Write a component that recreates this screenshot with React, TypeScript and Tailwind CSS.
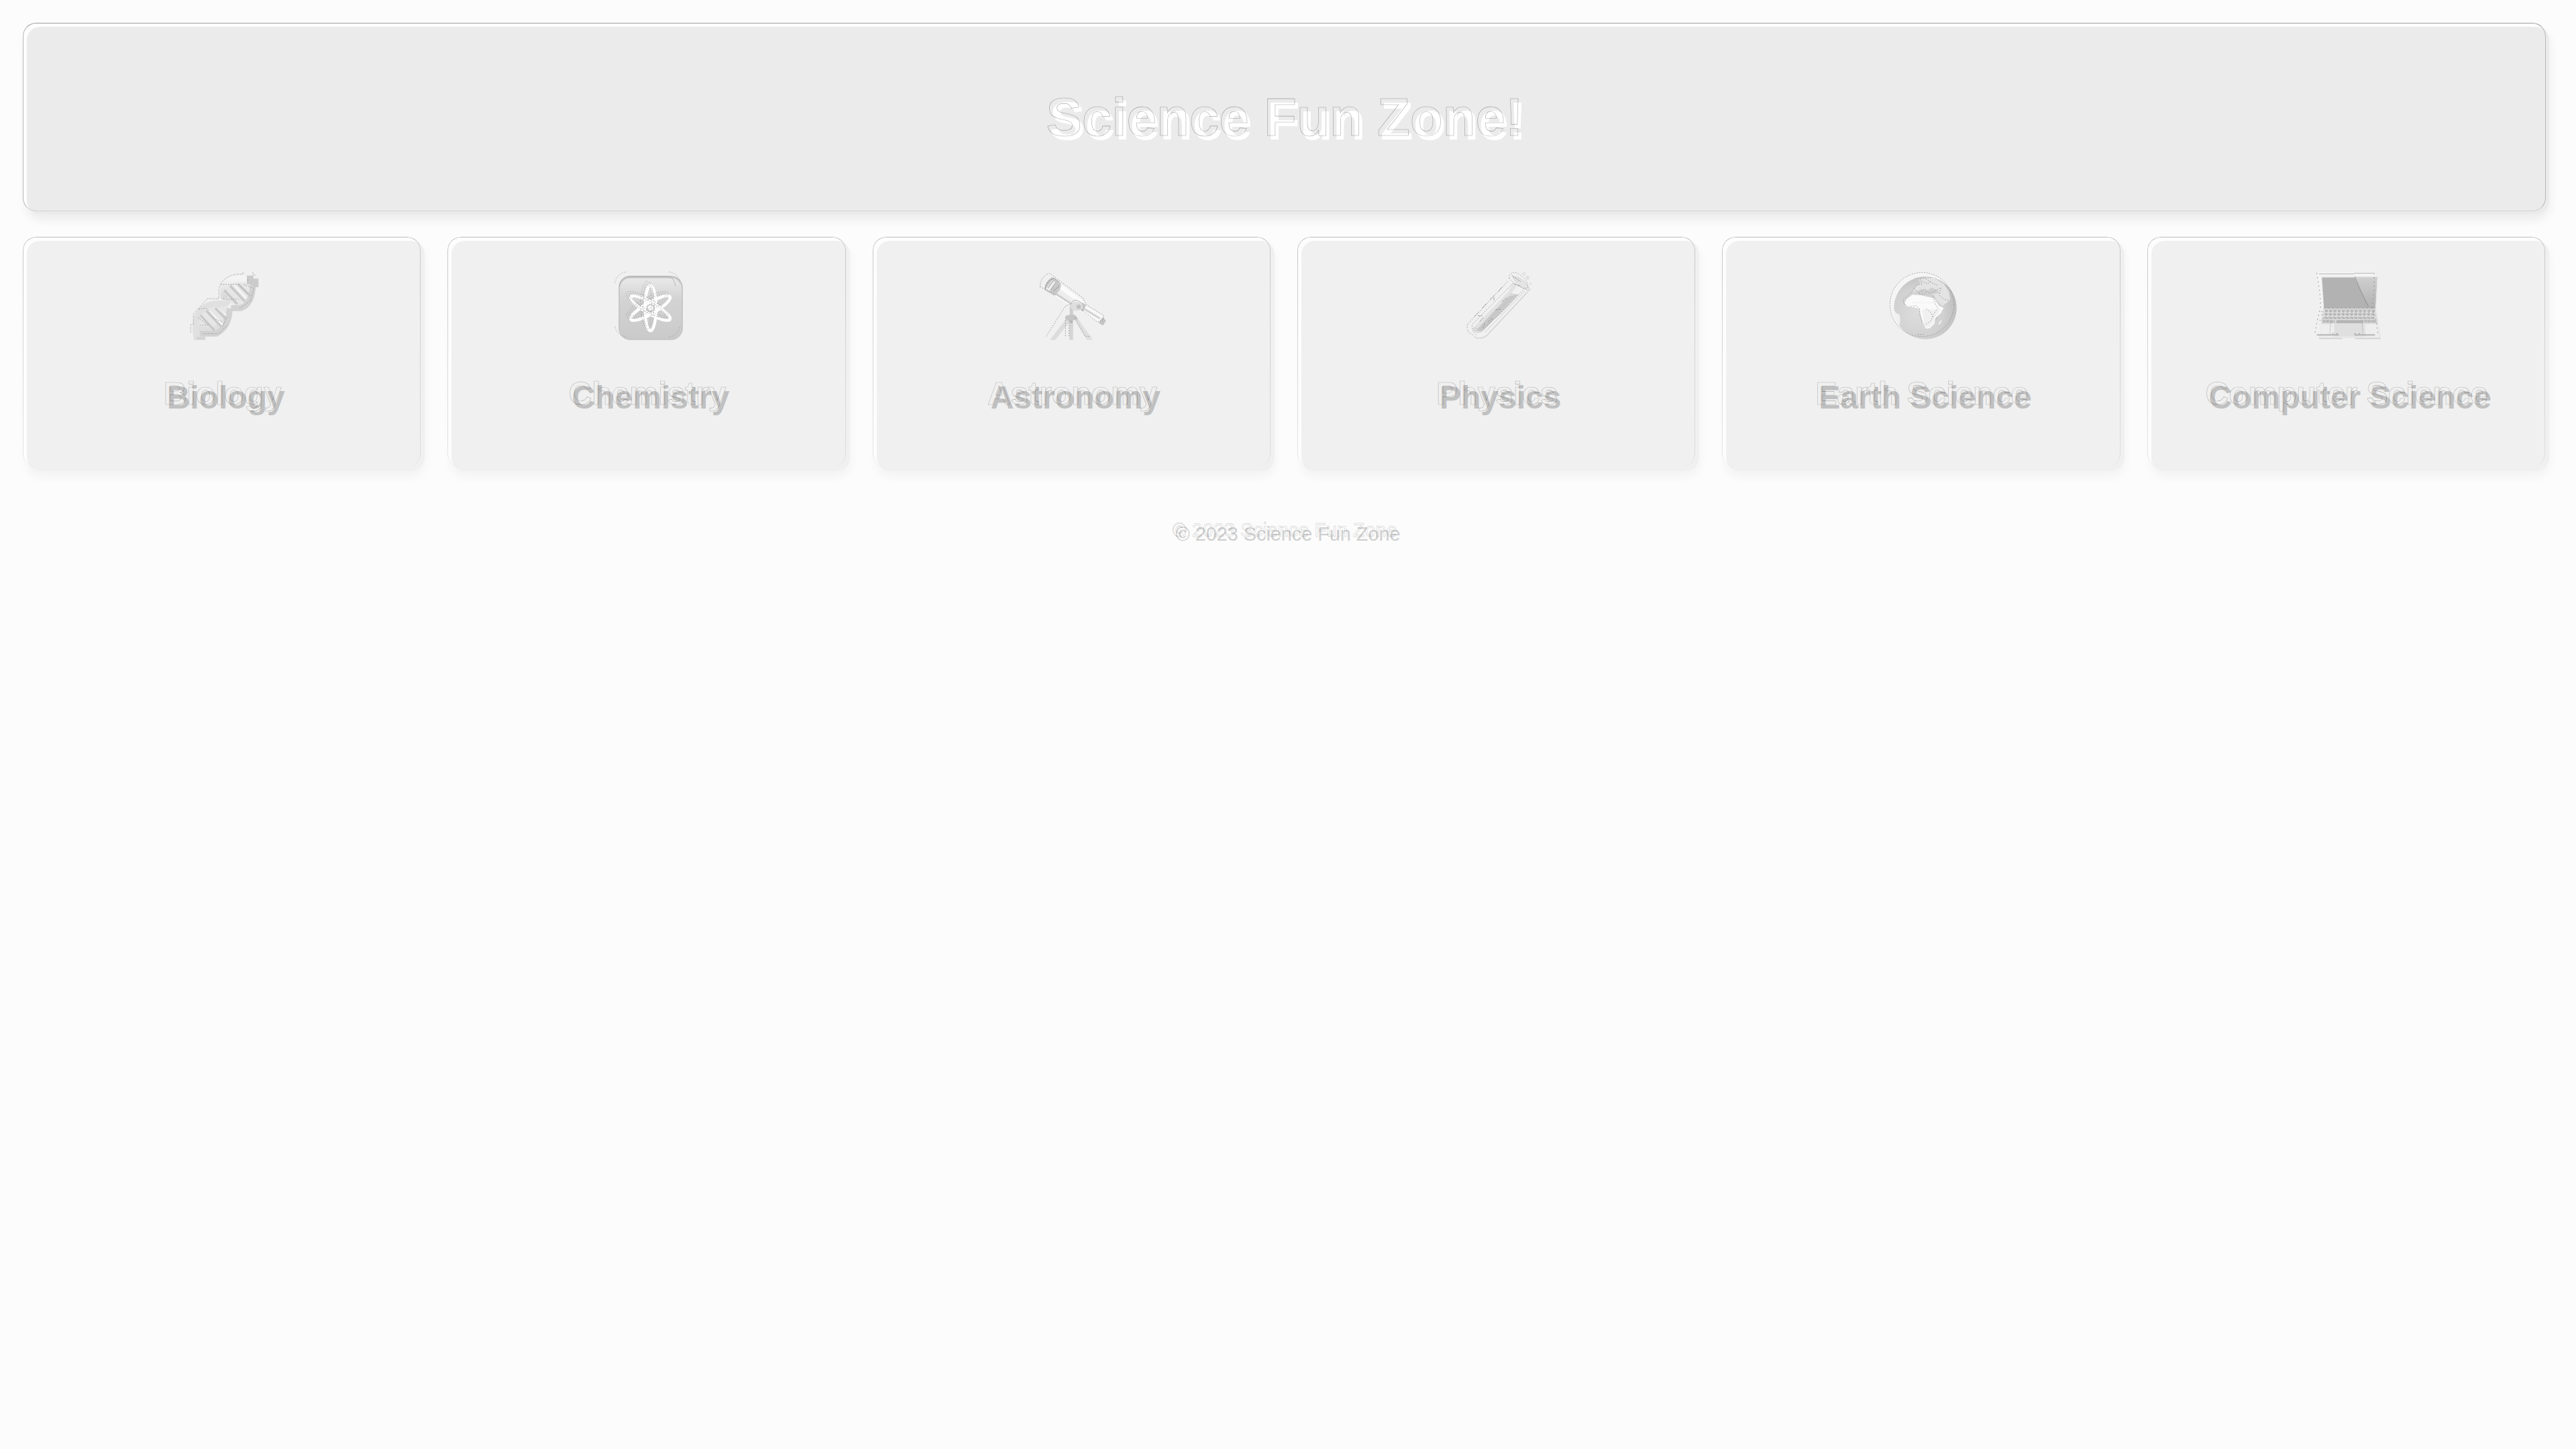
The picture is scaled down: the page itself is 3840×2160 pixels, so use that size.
import type { ReactNode } from "react";

function Icon({ x, children }: { x: number; children: ReactNode }) {
  return (
    <svg viewBox={`${x} 0 420 390`} width={140} height={130} fill="none" className="block">
      {children}
    </svg>
  );
}

const dots = { stroke: "#8c8c8c", strokeWidth: 2.5, strokeDasharray: "5 6" };

function Dna() {
  return (
    <Icon x={20}>
      <defs>
        <linearGradient id="dnaA" x1="0" y1="0" x2="0" y2="1">
          <stop offset="0" stopColor="#f4f4f4" />
          <stop offset="1" stopColor="#d6d6d6" />
        </linearGradient>
      </defs>
      <path d="M104 250L158 200H240L244 240L200 300H104ZM206 130L250 90H340V150L290 200L240 180Z" fill="#e6e6e6" />
      <path d="M98 350V304H180L232 262L246 208" stroke="#dedede" strokeWidth="26" />
      <path d="M98 335C88 280 95 225 145 198C190 175 238 205 238 168" stroke="#e0e0e0" strokeWidth="28" />
      <path d="M112 322H186Q246 290 246 210" stroke="#d2d2d2" strokeWidth="26" />
      <path d="M224 166C210 116 230 82 276 78H345" stroke="url(#dnaA)" strokeWidth="30" />
      <path d="M252 208H296C330 195 350 160 350 95" stroke="#d2d2d2" strokeWidth="27" />
      <path d="M116 240L178 308M142 220L208 290M182 208L228 256M222 128L280 190M248 108L314 178M284 100L340 154" stroke="#c8c8c8" strokeWidth="10" />
      <path d="M154 220L214 282M266 104L320 164M194 206L230 242" stroke="#f6f6f6" strokeWidth="8" />
      <path d="M323 62H352V76H375V114H350V102H323Z" fill="#cbcbcb" />
      <path d="M99 336H138V350H99Z" fill="#d4d4d4" />
      <path d="M72 318V282L84 280V234L146 166H198V124Q210 66 280 56H306V46M350 46V60H362" stroke="#a6a6a6" strokeWidth="2" strokeDasharray="12 3" />
      <path d="M108 212L142 208L178 254L210 268M206 102H286L328 150M196 206L232 250L214 292M112 284H152M128 322H196L236 284M308 102L354 120L340 174L290 210M218 168H286M328 80v5M104 250L148 284" {...dots} />
    </Icon>
  );
}

function Atom() {
  return (
    <Icon x={0}>
      <defs>
        <linearGradient id="tile" x1="0" y1="0" x2="0" y2="1">
          <stop offset="0" stopColor="#e9e9e9" />
          <stop offset=".35" stopColor="#d3d3d3" />
          <stop offset="1" stopColor="#cacaca" />
        </linearGradient>
      </defs>
      <rect x="66" y="63" width="288" height="288" rx="54" fill="#c7c7c7" />
      <rect x="72" y="74" width="276" height="271" rx="46" fill="url(#tile)" />
      <path d="M70 110Q74 66 120 66H282Q318 70 320 108" stroke="#a9a9a9" strokeWidth="2.5" />
      {[0, 60, 120].map((a) => (
        <ellipse key={a} cx="209" cy="208" rx="25" ry="101" stroke="#fff" strokeWidth="13" transform={`rotate(${a} 209 208)`} />
      ))}
      <circle cx="210" cy="208" r="12" fill="#fff" />
      {[0, 60, 120].map((a) => (
        <g key={a} transform={`rotate(${a} 195 193)`} {...dots} strokeWidth="2">
          <ellipse cx="195" cy="193" rx="30" ry="106" />
          <ellipse cx="195" cy="193" rx="19" ry="94" />
        </g>
      ))}
      <path d="M50 96Q58 52 102 46M292 46Q334 52 342 98M50 290Q58 328 100 338M292 338Q334 330 342 288" {...dots} strokeWidth="2" />
    </Icon>
  );
}

function Telescope() {
  return (
    <Icon x={10}>
      <path d="M182 252L106 350H130L200 262Z" fill="#dcdcdc" />
      <path d="M193 255H210V350H193Z" fill="#d5d5d5" />
      <path d="M208 250L272 350H298L228 248Z" fill="#dfdfdf" />
      <path d="M174 250Q176 238 196 238H216Q228 244 230 258L202 264L176 260Z" fill="#c5c5c5" />
      <path d="M195 198H210V240H195Z" fill="#cccccc" />
      <path d="M196 264H208V274H196Z" fill="#b2b2b2" />
      <path d="M152 98L264 182L246 224L126 152Z" fill="#fbfbfb" />
      <path d="M144 118L230 180L222 200L130 148Z" fill="#ededed" />
      <path d="M132 142L202 188" stroke="#d2d2d2" strokeWidth="8" />
      <path d="M116 70L156 98Q158 128 126 152L82 126Q84 88 116 70Z" fill="#c8c8c8" />
      <path d="M118 82L134 96L104 132L88 122Z" fill="#ededed" />
      <path d="M84 124Q88 86 124 74L148 92M98 118L122 84M110 126L132 94M122 132L148 108" stroke="#989898" strokeWidth="3" />
      <path d="M264 194L344 244L326 274L248 222Z" fill="#f8f8f8" />
      <path d="M254 208L330 254" stroke="#d2d2d2" strokeWidth="9" />
      <path d="M250 182L268 194L254 224L238 214Z" fill="#c4c4c4" />
      <path d="M342 248L357 264L344 286L324 274Z" fill="#c4c4c4" />
      <ellipse cx="226" cy="200" rx="28" ry="20" fill="#dedede" />
      <circle cx="235" cy="202" r="10" fill="#c2c2c2" />
      <path d="M198 194Q208 170 226 172L248 184" stroke="#b0b0b0" strokeWidth="3" />
      <path d="M62 112Q66 64 104 52L254 162L268 192L346 240V258L318 270L250 216M62 112L136 150L200 190L176 198L90 334M176 262V338M192 262V338M218 250L264 334H290" {...dots} strokeWidth="2.5" />
    </Icon>
  );
}

function TestTube() {
  return (
    <Icon x={20}>
      <path d="M284 70L354 132L168 332Q132 356 106 334Q88 308 106 282Z" fill="#f1f1f1" />
      <path d="M350 136L168 330Q138 352 112 336" stroke="#d6d6d6" strokeWidth="5" />
      <path d="M338 132L158 318" stroke="#e2e2e2" strokeWidth="5" />
      <path d="M262 138L308 146L146 314Q116 328 104 300Z" fill="#dadada" />
      <path d="M256 158L308 146L146 312L122 306Z" fill="#c8c8c8" />
      <path d="M112 292L262 138L284 98L302 110L270 150L128 298Z" fill="#e2e2e2" />
      <path d="M284 70Q318 60 354 112Q366 128 356 132Q310 116 284 70Z" fill="#e4e4e4" stroke="#d3d3d3" strokeWidth="3" />
      <circle cx="334" cy="54" r="9" fill="#e4e4e4" />
      <circle cx="350" cy="72" r="8" fill="#dedede" />
      <circle cx="364" cy="98" r="6" fill="#e2e2e2" />
      <path d="M268 74Q268 44 300 50Q346 72 352 108Q350 126 330 118Q290 102 268 74M262 88L82 280Q74 316 106 328M286 96L104 280Q96 306 124 330M330 128L152 306M308 150L240 222L164 290" {...dots} />
      <path d="M112 246L130 228M148 208L166 188M184 168L202 150M220 134L236 114M136 268L152 250M174 270L196 250M206 216L230 212M236 180L258 160M150 298L160 276M280 62L320 90M290 100L320 110M128 242H148M200 160V176" {...dots} strokeDasharray="12 3" />
    </Icon>
  );
}

function Globe() {
  return (
    <Icon x={0}>
      <defs>
        <radialGradient id="sea" cx=".38" cy=".58" r=".68">
          <stop offset="0" stopColor="#dddddd" />
          <stop offset=".6" stopColor="#d1d1d1" />
          <stop offset="1" stopColor="#b9b9b9" />
        </radialGradient>
      </defs>
      <circle cx="195" cy="192" r="142" fill="#f5f5f5" />
      <circle cx="210" cy="207" r="140" fill="url(#sea)" />
      <path d="M70 210Q76 236 95 236Q100 260 96 286Q66 250 70 210Z" fill="#f1f1f1" />
      <path d="M152 136L162 116L188 96L178 80L210 68L250 72L292 98L316 134L322 170L304 186L286 198L260 172L252 150L222 138L202 144L186 130Z" fill="#e3e3e3" />
      <path d="M164 140L190 122L220 128L238 116L262 126L272 142L246 144L228 154L206 146Z" fill="#cfcfcf" />
      <path d="M126 168L152 148L188 150L224 158L250 164L272 198L292 206L280 230L256 252L250 278L230 298L214 300L200 278L192 246L182 210L158 204L130 204L116 188Z" fill="#fafafa" />
      <path d="M196 214H262L280 214L256 246L246 274L226 294L214 292L202 268Z" fill="#f0f0f0" />
      <path d="M268 278L280 260L284 266L274 282Z" fill="#ededed" />
      <circle cx="195" cy="192" r="143" {...dots} strokeWidth="2.5" />
      <path d="M116 190L110 170L136 150L154 130L172 104L196 100L184 78L240 70M118 190L134 204L168 196L184 210L186 242L196 272L208 284L236 264L246 236L266 208L256 192L242 150M156 118L184 140L208 122L228 142L256 130L280 116L272 150L296 170L320 172M214 210L234 228L246 250M204 70L236 94L264 106M194 86L220 100L240 84M182 144L206 146L216 132M256 262L266 246M176 326H202" {...dots} strokeWidth="2.5" />
      <path d="M154 184H246" stroke="#d8d8d8" strokeWidth="2" strokeDasharray="5 6" />
    </Icon>
  );
}

function Laptop() {
  const rows = [
    { y: 214, x: 108, n: 12 },
    { y: 230, x: 106, n: 12 },
    { y: 246, x: 104, n: 12 },
  ];
  return (
    <Icon x={10}>
      <defs>
        <linearGradient id="glare" x1="0" y1="0" x2="0" y2="1">
          <stop offset="0" stopColor="#cfcfcf" />
          <stop offset="1" stopColor="#b2b2b2" />
        </linearGradient>
      </defs>
      <path d="M74 48H330L338 208H90Z" fill="#f4f4f4" />
      <path d="M92 66H346L338 210L358 342V347H244L238 342H190L184 347H82V340L102 210Z" fill="#e6e6e6" />
      <path d="M95 71H341L333 209H104Z" fill="#b2b2b2" />
      <path d="M240 71H341L333 209H308Z" fill="url(#glare)" />
      <path d="M102 211H334L344 278H92Z" fill="#dcdcdc" />
      {rows.map((r) =>
        Array.from({ length: r.n }, (_, i) => (
          <rect key={`${r.y}-${i}`} x={r.x + i * 19} y={r.y} width="15" height="10" rx="2" fill="#bdbdbd" />
        ))
      )}
      <path d="M100 262H154V274H98ZM286 262H338L340 274H286Z" fill="#c4c4c4" />
      <path d="M160 262H280V275H159Z" fill="#b3b3b3" />
      <path d="M152 277H284L288 332H148Z" fill="#dfdfdf" />
      <path d="M92 280L86 336H146L150 280ZM288 280L292 336H352L344 280Z" fill="#eeeeee" />
      <path d="M82 344H184M244 344H358" stroke="#cdcdcd" strokeWidth="3" />
      <path d="M82 55H238M238 52H326" stroke="#a8a8a8" strokeWidth="2.5" />
      <path d="M242 68L268 130L302 200" stroke="#858585" strokeWidth="3" strokeDasharray="8 2" />
      <path d="M72 328H170M240 328H332" stroke="#b4b4b4" strokeWidth="6" />
      <path d="M134 268L130 322M274 268L278 322" stroke="#a6a6a6" strokeWidth="2" strokeDasharray="12 3" />
      <path d="M82 262H140M268 262H336" stroke="#b0b0b0" strokeWidth="2" />
      <path d="M72 50L84 126L90 200L74 262L62 330M328 50V130L320 200L336 260L346 330M104 208H330M140 322H170M240 322H270M92 224L334 226M92 238H334M96 254H334M98 268H152M284 268H338" {...dots} strokeDasharray="6 13" />
    </Icon>
  );
}

const subjects = [
  { Art: Dna, name: "Biology" },
  { Art: Atom, name: "Chemistry" },
  { Art: Telescope, name: "Astronomy" },
  { Art: TestTube, name: "Physics" },
  { Art: Globe, name: "Earth Science" },
  { Art: Laptop, name: "Computer Science" },
];

// Text with a thin engraved contour sitting up and to the left of the letters.
const contour =
  "relative before:absolute before:-left-[5px] before:-top-[6px] before:whitespace-nowrap before:text-transparent before:content-[attr(data-text)]";

export default function App() {
  return (
    <div className="min-h-[2160px] bg-[#fcfcfc] p-10 font-['Liberation_Sans',Arial,sans-serif]">
      <header className="relative flex h-[279px] items-center justify-center rounded-[20px] bg-[#ebebeb] pt-[2px] shadow-[-6px_-6px_0_#fdfdfd,0_8px_16px_rgba(0,0,0,0.07)]">
        <span className="absolute -left-[6px] -top-[6px] h-[281px] w-[3761px] rounded-[20px] border border-b-[#d2d2d2] border-l-[#b8b8b8] border-r-[#b8b8b8] border-t-[#9c9c9c]" />
        <h1
          data-text="Science Fun Zone!"
          className={`text-[80px] font-bold leading-[92px] text-white before:[-webkit-text-stroke:0.6px_#00000058] ${contour}`}
        >
          Science Fun Zone!
        </h1>
      </header>

      <main className="mt-10 grid grid-cols-6 gap-10">
        {subjects.map(({ Art, name }) => (
          <section
            key={name}
            className="relative flex h-[343px] flex-col items-center rounded-[20px] bg-[#f0f0f0] pt-[31px] shadow-[-6px_-6px_0_#fdfdfd,0_8px_16px_rgba(0,0,0,0.045)]"
          >
            <span className="absolute -left-[6px] -top-[6px] h-[343px] w-full rounded-[20px] border border-b-0 border-l-[#c6c6c6] border-r-[#c6c6c6] border-t-[#bdbdbd] [mask-image:linear-gradient(#000,#0006)]" />
            <Art />
            <h2
              data-text={name}
              className={`mt-[45px] text-[48px] font-bold leading-[56px] text-[#c0c0c0] before:[-webkit-text-stroke:0.6px_#00000050] ${contour}`}
            >
              {name}
            </h2>
          </section>
        ))}
      </main>

      <footer className="mt-[78px] text-center">
        <span
          data-text="© 2023 Science Fun Zone"
          className={`text-[28.8px] leading-[33px] text-[#d0d0d0] before:[-webkit-text-stroke:0.5px_#00000048] ${contour}`}
        >
          © 2023 Science Fun Zone
        </span>
      </footer>
    </div>
  );
}
